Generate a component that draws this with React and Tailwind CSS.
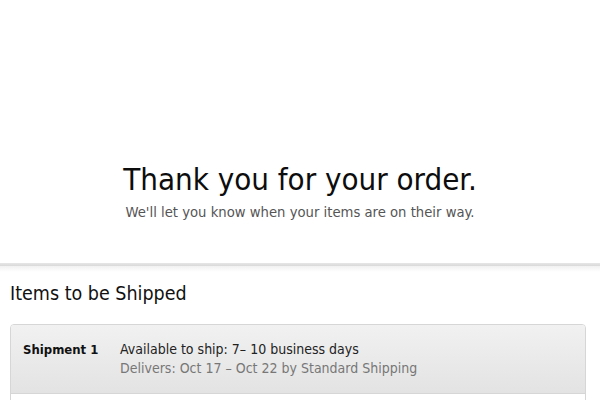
export default function App() {
  return (
    <div className="w-[600px] h-[400px] overflow-hidden bg-white font-stretch-condensed" style={{ fontFamily: '"DejaVu Sans Condensed", "DejaVu Sans", "Liberation Sans", sans-serif' }}>
      <div className="h-[263px] flex flex-col items-center pt-[157px]">
        <h1 className="text-[31px] leading-[44px] text-[#0d0d0d]">Thank you for your order.</h1>
        <p className="text-[14.7px] leading-[18px] text-[#555] mt-[2px]">We'll let you know when your items are on their way.</p>
      </div>
      <div className="h-[3px] bg-gradient-to-b from-[#e6e6e6] to-[#d9d9d9]" />
      <div className="h-[6px] bg-gradient-to-b from-[#f0f0f0] to-white" />
      <div className="px-[10px]">
        <h2 className="text-[19.5px] leading-[24px] text-[#111] mt-[10px]">Items to be Shipped</h2>
        <div className="mt-[18px] w-[576px] border border-[#d6d6d6] rounded-[4px] overflow-hidden">
          <div className="h-[69px] bg-gradient-to-b from-[#f1f1f1] to-[#e3e3e3] border-b border-[#d6d6d6] flex pt-[15px] pl-[12px]">
            <div className="w-[97px] text-[13px] font-bold text-[#111] leading-[19px]">Shipment 1</div>
            <div className="text-[14px] leading-[19px]">
              <div className="text-[#222]">Available to ship: 7– 10 business days</div>
              <div className="text-[#777]">Delivers: Oct 17 – Oct 22 by Standard Shipping</div>
            </div>
          </div>
          <div className="h-[40px] bg-white" />
        </div>
      </div>
    </div>
  );
}
